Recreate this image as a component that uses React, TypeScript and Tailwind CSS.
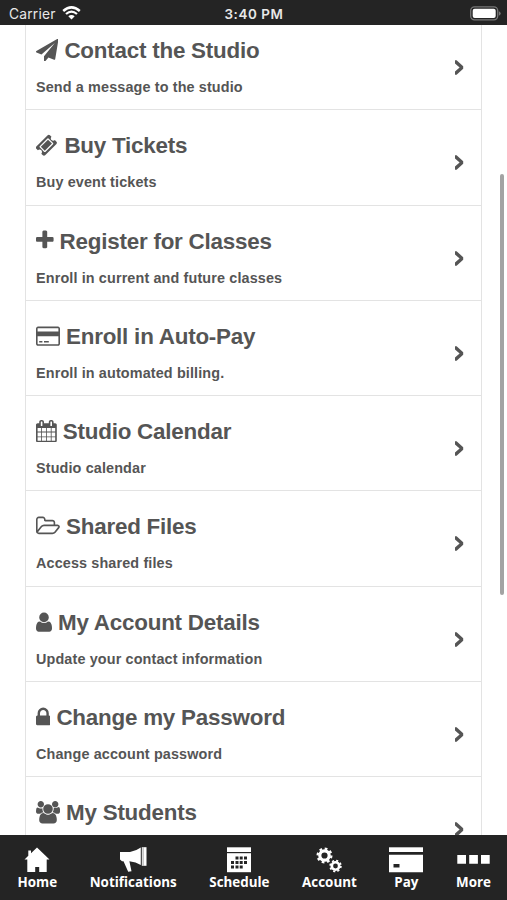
import React, { useState } from 'react';

interface Glyph {
  viewBox: string;
  d: string;
}

interface MenuItem {
  title: string;
  description?: string;
  glyph: Glyph;
  // advance of the glyph, so the title follows it like inline text
  iconClass: string;
}

const menuItems: MenuItem[] = [
  {
    title: 'Contact the Studio',
    description: 'Send a message to the studio',
    iconClass: 'w-[22.4px]',
    glyph: {
      viewBox: '0 0 1792 1792',
      d: 'M1764 11q33 24 27 64l-256 1536q-5 29-32 45-14 8-31 8-11 0-24-5l-453-185-242 295q-18 23-49 23-13 0-22-4-19-7-30.5-23.5t-11.5-36.5v-349l864-1059-1069 925-395-162q-37-14-40-55-2-40 32-59l1664-960q15-9 32-9 20 0 36 11z',
    },
  },
  {
    title: 'Buy Tickets',
    description: 'Buy event tickets',
    iconClass: 'w-[22.4px]',
    glyph: {
      viewBox: '64 0 1792 1792',
      d: 'M1024 452l316 316-572 572-316-316zm-211 979l618-618q19-19 19-45t-19-45l-362-362q-18-18-45-18t-45 18l-618 618q-19 19-19 45t19 45l362 362q18 18 45 18t45-18zm889-637l-907 908q-37 37-90.5 37t-90.5-37l-126-126q56-56 56-136t-56-136-136-56-136 56l-125-126q-37-37-37-90.5t37-90.5l907-906q37-37 90.5-37t90.5 37l125 125q-56 56-56 136t56 136 136 56 136-56l126 125q37 37 37 90.5t-37 90.5z',
    },
  },
  {
    title: 'Register for Classes',
    description: 'Enroll in current and future classes',
    iconClass: 'w-[17.6px]',
    glyph: {
      viewBox: '192 0 1408 1792',
      d: 'M1600 736v192q0 40-28 68t-68 28h-416v416q0 40-28 68t-68 28h-192q-40 0-68-28t-28-68v-416h-416q-40 0-68-28t-28-68v-192q0-40 28-68t68-28h416v-416q0-40 28-68t68-28h192q40 0 68 28t28 68v416h416q40 0 68 28t28 68z',
    },
  },
  {
    title: 'Enroll in Auto-Pay',
    description: 'Enroll in automated billing.',
    iconClass: 'w-[24px]',
    glyph: {
      viewBox: '0 0 1920 1792',
      d: 'M1760 128q66 0 113 47t47 113v1216q0 66-47 113t-113 47h-1600q-66 0-113-47t-47-113v-1216q0-66 47-113t113-47h1600zm-1600 128q-13 0-22.5 9.5t-9.5 22.5v224h1664v-224q0-13-9.5-22.5t-22.5-9.5h-1600zm1600 1280q13 0 22.5-9.5t9.5-22.5v-608h-1664v608q0 13 9.5 22.5t22.5 9.5h1600zm-1504-128v-128h256v128h-256zm384 0v-128h384v128h-384z',
    },
  },
  {
    title: 'Studio Calendar',
    description: 'Studio calendar',
    iconClass: 'w-[20.8px]',
    glyph: {
      viewBox: '64 0 1664 1792',
      d: 'M192 1664h288v-288h-288v288zm352 0h320v-288h-320v288zm-352-352h288v-320h-288v320zm352 0h320v-320h-320v320zm-352-384h288v-288h-288v288zm736 736h320v-288h-320v288zm-384-736h320v-288h-320v288zm768 736h288v-288h-288v288zm-384-352h320v-320h-320v320zm-352-864v-288q0-13-9.5-22.5t-22.5-9.5h-64q-13 0-22.5 9.5t-9.5 22.5v288q0 13 9.5 22.5t22.5 9.5h64q13 0 22.5-9.5t9.5-22.5zm736 864h288v-320h-288v320zm-384-384h320v-288h-320v288zm384 0h288v-288h-288v288zm32-480v-288q0-13-9.5-22.5t-22.5-9.5h-64q-13 0-22.5 9.5t-9.5 22.5v288q0 13 9.5 22.5t22.5 9.5h64q13 0 22.5-9.5t9.5-22.5zm384-64v1280q0 52-38 90t-90 38h-1408q-52 0-90-38t-38-90v-1280q0-52 38-90t90-38h128v-96q0-66 47-113t113-47h64q66 0 113 47t47 113v96h384v-96q0-66 47-113t113-47h64q66 0 113 47t47 113v96h128q52 0 90 38t38 90z',
    },
  },
  {
    title: 'Shared Files',
    description: 'Access shared files',
    iconClass: 'w-[24px]',
    glyph: {
      viewBox: '64 0 1920 1792',
      d: 'M1845 931q0-35-53-35h-1088q-40 0-85.5 21.5t-71.5 52.5l-294 363q-18 24-18 40 0 35 53 35h1088q40 0 86-22t71-53l294-363q18-22 18-39zm-1141-163h768v-160q0-40-28-68t-68-28h-576q-40 0-68-28t-28-68v-64q0-40-28-68t-68-28h-320q-40 0-68 28t-28 68v853l256-315q44-53 116-87.5t140-34.5zm1269 163q0 62-46 120l-295 363q-43 53-116 87.5t-140 34.5h-1088q-92 0-158-66t-66-158v-960q0-92 66-158t158-66h320q92 0 158 66t66 158v32h544q92 0 158 66t66 158v160h192q54 0 99 24.5t67 70.5q15 32 15 68z',
    },
  },
  {
    title: 'My Account Details',
    description: 'Update your contact information',
    iconClass: 'w-[16px]',
    glyph: {
      viewBox: '256 0 1280 1792',
      d: 'M1536 1399q0 109-62.5 187t-150.5 78h-854q-88 0-150.5-78t-62.5-187q0-85 8.5-160.5t31.5-152 58.5-131 94-89 134.5-34.5q131 128 313 128t313-128q76 0 134.5 34.5t94 89 58.5 131 31.5 152 8.5 160.5zm-256-887q0 159-112.5 271.5t-271.5 112.5-271.5-112.5-112.5-271.5 112.5-271.5 271.5-112.5 271.5 112.5 112.5 271.5z',
    },
  },
  {
    title: 'Change my Password',
    description: 'Change account password',
    iconClass: 'w-[14.4px]',
    glyph: {
      viewBox: '320 0 1152 1792',
      d: 'M640 768h512v-192q0-106-75-181t-181-75-181 75-75 181v192zm832 96v576q0 40-28 68t-68 28h-960q-40 0-68-28t-28-68v-576q0-40 28-68t68-28h32v-192q0-184 132-316t316-132 316 132 132 316v192h32q40 0 68 28t28 68z',
    },
  },
  {
    title: 'My Students',
    iconClass: 'w-[24px]',
    glyph: {
      viewBox: '64 0 1920 1792',
      d: 'M657 896q-162 5-265 128h-134q-82 0-138-40.5t-56-118.5q0-353 124-353 6 0 43.5 21t97.5 42.5 119 21.5q67 0 133-23-5 37-5 66 0 159 93 292zm1071 637q0 120-73 189.5t-194 69.5h-874q-121 0-194-69.5t-73-189.5q0-53 3.5-103.5t14-109 26.5-108.5 43-97.5 62-81 85.5-53.5 111.5-20q10 0 43 21.5t73 48 107 48 135 21.5 135-21.5 107-48 73-48 43-21.5q61 0 111.5 20t85.5 53.5 62 81 43 97.5 26.5 108.5 14 109 3.5 103.5zm-1024-1277q0 106-75 181t-181 75-181-75-75-181 75-181 181-75 181 75 75 181zm704 384q0 159-112.5 271.5t-271.5 112.5-271.5-112.5-112.5-271.5 112.5-271.5 271.5-112.5 271.5 112.5 112.5 271.5zm576 225q0 78-56 118.5t-138 40.5h-134q-103-123-265-128 93-133 93-292 0-29-5-66 66 23 133 23 59 0 119-21.5t97.5-42.5 43.5-21q124 0 124 353zm-128-609q0 106-75 181t-181 75-181-75-75-181 75-181 181-75 181 75 75 181z',
    },
  },
];

const StatusBar = () => (
  <header className="relative flex h-[25px] shrink-0 items-center justify-between bg-[#242424] pr-[6px] pl-[9px] font-['Inter','Liberation_Sans',sans-serif] text-[#e8e8e8]">
    <div className="flex items-center gap-[6px] pt-[3px]">
      <span className="text-[13.8px] leading-4 tracking-[0.2px]">Carrier</span>
      <svg className="mb-[3px] h-[14px] w-[19px]" viewBox="0 0 19 14" fill="none" stroke="#fff">
        <path d="M1.2 5Q9.5-2.2 17.8 5" strokeWidth="2.5" />
        <path d="M4 8Q9.5 3.3 15 8" strokeWidth="2.3" />
        <path d="M9.5 13.6L6.3 10.3Q9.5 7.7 12.7 10.3Z" fill="#fff" stroke="none" />
      </svg>
    </div>
    <span className="absolute top-[6px] left-1/2 -translate-x-1/2 pl-px text-[13.4px] leading-4 font-semibold tracking-[0.6px] whitespace-nowrap">
      3:40 PM
    </span>
    <svg className="mt-px h-[15px] w-[31px]" viewBox="0 0 31 15">
      <rect x="0.7" y="0.9" width="27" height="13" rx="3.8" fill="#242424" stroke="#777" strokeWidth="1.3" />
      <rect x="2.7" y="2.7" width="23" height="9.4" rx="2" fill="#fff" />
      <path d="M28.9 5.2q1.8.8 1.8 2.3t-1.8 2.3z" fill="#777" />
    </svg>
  </header>
);

const MenuRow: React.FC<{ item: MenuItem }> = ({ item }) => (
  <li className="flex h-[95.3px] shrink-0 items-start justify-between border-b-[1.5px] border-[#e3e3e3] pt-[22px] pr-[17px] pl-[10px]">
    <div className="flex flex-col">
      <h2 className="flex items-center gap-[6px] text-[22.4px] leading-[28px] font-bold tracking-[-0.22px] whitespace-nowrap">
        <svg
          className={`mb-[2px] h-[22.4px] shrink-0 ${item.iconClass}`}
          viewBox={item.glyph.viewBox}
          fill="currentColor"
        >
          <path d={item.glyph.d} />
        </svg>
        {item.title}
      </h2>
      {item.description && (
        <p className="mt-[12px] text-[14.4px] leading-[20px] font-bold tracking-[0.13px] whitespace-nowrap">
          {item.description}
        </p>
      )}
    </div>
    <svg className="mt-[23px] h-[15px] w-[10px]" viewBox="0 0 10 15" fill="currentColor">
      <path d="M1 0.3L2.6 0.3L9.2 6.2V8.8L2.6 14.8L1 14.8V11.6L5.6 7.5L1 3.5Z" />
    </svg>
  </li>
);

// Bottom tab icons, all drawn 26px high
const HomeIcon = () => (
  <svg className="h-[26px] w-[26px]" viewBox="0 0 26 26" fill="#fff">
    <path d="M13 0.5L25.5 12.5H22.7V25H15.2V20H11.2V25H3.3V12.5H0.5L4.3 8.8V3.5H7V6.2Z" />
  </svg>
);

const BullhornIcon = () => (
  <svg className="h-[26px] w-[28px]" viewBox="0 0 28 26" fill="#fff">
    <path d="M1 5H11Q17 4 21.800 0.500V18Q17 15 10.400 14.300L12.500 24.300L9.200 24.700L4.500 14.300H3L1 12.500Z" />
    <rect x="22.8" y="0.2" width="4.7" height="18.6" />
    <path d="M24.1 0.2V18.8" stroke="#8a8a8a" strokeWidth="0.8" />
  </svg>
);

const ScheduleIcon = () => (
  <svg className="h-[26px] w-[24px]" viewBox="0 0 24 26" fill="#fff">
    <rect y="0.3" width="24" height="4.7" />
    <rect y="6.2" width="24" height="19" />
    <g fill="#242424">
      <path d="M8.5 9.5h3v3h-3zM12.700 9.500h3v3h-3zM17 9.500h3v3h-3z" />
      <path d="M4 14h3v3H4zM8.500 14h3v3h-3zM12.700 14h3v3h-3zM17 14h3v3h-3z" />
      <path d="M4 18.500h3v3H4zM8.500 18.500h3v3h-3zM12.700 18.500h3v3h-3z" />
    </g>
  </svg>
);

const AccountIcon = () => (
  <svg className="h-[26px] w-[26px]" viewBox="0 0 26 26" fill="none" stroke="#fff">
    <circle cx="8.5" cy="8.5" r="4.700" strokeWidth="3.200" />
    <circle cx="8.5" cy="8.5" r="6.900" strokeWidth="2.200" strokeDasharray="2.710 2.709" />
    <circle cx="19.500" cy="19" r="3.700" strokeWidth="2.600" />
    <circle cx="19.500" cy="19" r="5.400" strokeWidth="1.700" strokeDasharray="2.120 2.121" />
  </svg>
);

const PayIcon = () => (
  <svg className="h-[26px] w-[34px]" viewBox="0 0 34 26" fill="#fff">
    <rect y="0.3" width="34" height="4.7" />
    <path d="M0 7.8H34V25.3H0ZM4.500 17V20.500H10.500V17Z" fillRule="evenodd" />
  </svg>
);

const MoreIcon = () => (
  <svg className="h-[26px] w-[33px]" viewBox="0 0 33 26" fill="#fff">
    <path d="M0.300 8h8.700v8.700H0.300zM12.200 8h8.700v8.700h-8.700zM24 8h8.700v8.700H24z" />
  </svg>
);

const tabs = [
  { label: 'Home', Icon: HomeIcon },
  { label: 'Notifications', Icon: BullhornIcon },
  { label: 'Schedule', Icon: ScheduleIcon },
  { label: 'Account', Icon: AccountIcon },
  { label: 'Pay', Icon: PayIcon },
  { label: 'More', Icon: MoreIcon },
];

const App: React.FC = () => {
  const [activeTab, setActiveTab] = useState('Home');

  return (
    <div className="flex h-[900px] w-[507px] flex-col overflow-hidden bg-white">
      <StatusBar />

      <main className="relative flex-1 overflow-hidden bg-white font-['Liberation_Sans',Arial,sans-serif] text-[#555]">
        {/* List is scrolled a little past the top of the first row */}
        <ul className="mx-[25px] -mt-[10px] flex flex-col border-x-[1.5px] border-[#e3e3e3]">
          {menuItems.map((item) => (
            <MenuRow key={item.title} item={item} />
          ))}
        </ul>
        <div className="absolute top-[149px] right-[3px] h-[421px] w-[4px] rounded-full bg-[#a3a3a3]" />
      </main>

      <nav className="flex h-[65px] shrink-0 justify-between bg-[#242424] pt-[12px] pr-[16px] pl-[17.5px]">
        {tabs.map(({ label, Icon }) => (
          <button
            key={label}
            onClick={() => setActiveTab(label)}
            aria-pressed={activeTab === label}
            className="flex flex-col items-center font-['Open_Sans','Noto_Sans',sans-serif] text-[13.4px] leading-[18px] font-bold text-white"
          >
            <Icon />
            <span>{label}</span>
          </button>
        ))}
      </nav>
    </div>
  );
};

export default App;
